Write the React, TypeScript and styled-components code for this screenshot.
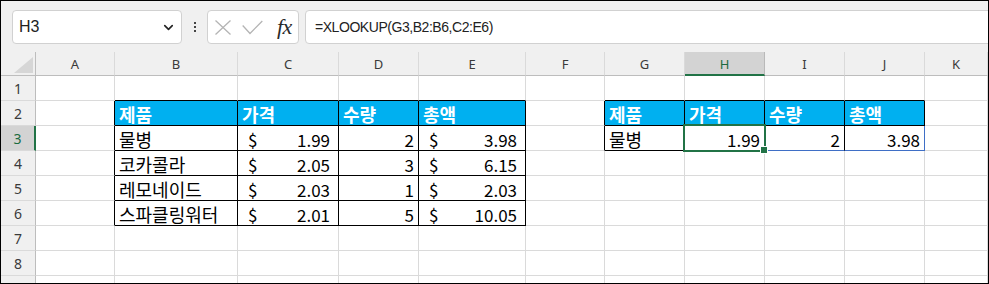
import React from 'react';
import styled, { createGlobalStyle } from 'styled-components';
import { ChevronDown } from 'lucide-react';

const GlobalStyle = createGlobalStyle`
  html, body {
    margin: 0;
    padding: 0;
    background: #ffffff;
  }
  * {
    box-sizing: border-box;
  }
`;

const colors = {
  chrome: '#f0f0f0',
  box: '#d1d1d1',
  grid: '#dadada',
  headLine: '#bdbdbd',
  headSel: '#d3d3d3',
  green: '#217346',
  greenText: '#1b6b3f',
  blue: '#3f6fc6',
  fill: '#00b0f0',
};

const GRID = '35px 79px 123px 101px 80px 107px 79px 80px 80px 80px 80px 1fr';
const COLS = ['A', 'B', 'C', 'D', 'E', 'F', 'G', 'H', 'I', 'J', 'K'];
// row 9 is only a sliver at the bottom edge, its number is hidden
const ROWS = [1, 2, 3, 4, 5, 6, 7, 8, 9];
const LAST_VISIBLE_LABEL = 8;

const Frame = styled.div`
  width: 989px;
  height: 284px;
  border: 1px solid #000;
  background: ${colors.chrome};
  display: flex;
  flex-direction: column;
  overflow: hidden;
`;

const Toolbar = styled.div`
  flex: none;
  height: 51px;
  display: flex;
  align-items: flex-start;
  padding: 9px 0 0 11px;
  font-family: 'Liberation Sans', Arial, sans-serif;
`;

const Box = styled.div`
  height: 34px;
  background: #fff;
  border: 1px solid ${colors.box};
  border-radius: 4px;
  display: flex;
  align-items: center;
`;

const NameBox = styled(Box)`
  width: 170px;
  justify-content: space-between;
  padding: 0 5px 0 6px;
  font-size: 16px;
  color: #222;
`;

const Dots = styled.div`
  width: 25px;
  height: 34px;
  display: flex;
  flex-direction: column;
  align-items: center;
  justify-content: center;
  gap: 2px;

  span {
    width: 2px;
    height: 2px;
    background: #444;
  }
`;

const FxButtons = styled(Box)`
  width: 92px;
  padding-left: 7px;
  gap: 11px;
`;

const Fx = styled.span`
  margin-left: 3px;
  font-family: 'Liberation Serif', 'Times New Roman', serif;
  font-style: italic;
  font-size: 22px;
  color: #2a2a2a;
  letter-spacing: -0.5px;
`;

const FormulaInput = styled(Box)`
  flex: 1;
  margin: 0 -12px 0 6px;
  padding-left: 9px;
  font-size: 14px;
  letter-spacing: -0.45px;
  color: #222;
`;

const Sheet = styled.div`
  flex: 1;
  display: grid;
  grid-template-columns: ${GRID};
  grid-template-rows: 24px;
  grid-auto-rows: 25px;
  background: #fff;
  overflow: hidden;
`;

const Corner = styled.div`
  position: relative;
  background: ${colors.chrome};
  border-right: 1px solid ${colors.headLine};
  border-bottom: 1px solid ${colors.headLine};

  &::after {
    content: '';
    position: absolute;
    right: 2px;
    bottom: 2px;
    border-left: 19px solid transparent;
    border-bottom: 16px solid #d6d6d6;
  }
`;

const ColHead = styled.div<{ $sel?: boolean }>`
  display: flex;
  align-items: center;
  justify-content: center;
  background: ${(p) => (p.$sel ? colors.headSel : colors.chrome)};
  color: ${(p) => (p.$sel ? colors.greenText : '#3a3a3a')};
  border-right: 1px solid ${(p) => (p.$sel ? '#b9b9b9' : colors.grid)};
  border-bottom: ${(p) => (p.$sel ? `2px solid ${colors.green}` : `1px solid ${colors.headLine}`)};
  font-family: 'Noto Sans', 'Liberation Sans', sans-serif;
  font-size: 13px;
  padding-top: 1px;
`;

const RowHead = styled.div<{ $sel?: boolean }>`
  display: flex;
  align-items: center;
  justify-content: center;
  background: ${(p) => (p.$sel ? colors.headSel : colors.chrome)};
  color: ${(p) => (p.$sel ? colors.greenText : '#3a3a3a')};
  border-right: ${(p) => (p.$sel ? `2px solid ${colors.green}` : `1px solid ${colors.headLine}`)};
  border-bottom: 1px solid ${colors.grid};
  font-family: 'Noto Sans', 'Liberation Sans', sans-serif;
  font-size: 14px;
  padding-top: 1px;
`;

const Cell = styled.div<{
  $right: string;
  $bottom: string;
  $fill?: string;
  $head?: boolean;
  $active?: boolean;
  $align?: 'left' | 'right' | 'split';
}>`
  position: relative;
  z-index: ${(p) => (p.$active ? 2 : 'auto')};
  display: flex;
  align-items: center;
  justify-content: ${(p) =>
    p.$align === 'right' ? 'flex-end' : p.$align === 'split' ? 'space-between' : 'flex-start'};
  padding: ${(p) => (p.$align === 'split' ? '2px 8px 0 10px' : '2px 4px 0 4px')};
  background: ${(p) => p.$fill || '#fff'};
  border-right: 1px solid ${(p) => p.$right};
  border-bottom: 1px solid ${(p) => p.$bottom};
  font-family: 'Noto Sans CJK KR', 'Noto Sans', sans-serif;
  font-size: 17px;
  line-height: 1;
  font-weight: ${(p) => (p.$head ? 700 : 400)};
  color: ${(p) => (p.$head ? '#fff' : '#000')};
  white-space: nowrap;
`;

// hangul labels run a touch wider than the digits
const Label = styled.span<{ $hangul?: boolean }>`
  font-size: ${(p) => (p.$hangul ? '18px' : 'inherit')};
`;

const Selection = styled.div`
  position: absolute;
  left: -2px;
  top: -2px;
  right: -2px;
  bottom: -2px;
  border: 2px solid ${colors.green};
  pointer-events: none;

  &::after {
    content: '';
    position: absolute;
    right: -4px;
    bottom: -4px;
    width: 6px;
    height: 6px;
    background: ${colors.green};
    border: 1px solid #fff;
  }
`;

type Spec = { text: string; head?: boolean; cur?: boolean; num?: boolean };

const data: Record<string, Spec> = {
  B2: { text: '제품', head: true },
  C2: { text: '가격', head: true },
  D2: { text: '수량', head: true },
  E2: { text: '총액', head: true },
  B3: { text: '물병' },
  C3: { text: '1.99', cur: true },
  D3: { text: '2', num: true },
  E3: { text: '3.98', cur: true },
  B4: { text: '코카콜라' },
  C4: { text: '2.05', cur: true },
  D4: { text: '3', num: true },
  E4: { text: '6.15', cur: true },
  B5: { text: '레모네이드' },
  C5: { text: '2.03', cur: true },
  D5: { text: '1', num: true },
  E5: { text: '2.03', cur: true },
  B6: { text: '스파클링워터' },
  C6: { text: '2.01', cur: true },
  D6: { text: '5', num: true },
  E6: { text: '10.05', cur: true },
  G2: { text: '제품', head: true },
  H2: { text: '가격', head: true },
  I2: { text: '수량', head: true },
  J2: { text: '총액', head: true },
  G3: { text: '물병' },
  H3: { text: '1.99', num: true },
  I3: { text: '2', num: true },
  J3: { text: '3.98', num: true },
};

// tables as [firstCol, firstRow, lastCol, lastRow]
const tables = [
  [1, 2, 4, 6],
  [6, 2, 9, 3],
];

const inside = (c: number, r: number, t: number[]) =>
  c >= t[0] && c <= t[2] && r >= t[1] && r <= t[3];

const borderRight = (c: number, r: number) => {
  if (COLS[c] === 'J' && r === 3) return colors.blue;
  return tables.some((t) => inside(c, r, t) || inside(c + 1, r, t)) ? '#000' : colors.grid;
};

const borderBottom = (c: number, r: number) => {
  if ((COLS[c] === 'I' || COLS[c] === 'J') && r === 3) return colors.blue;
  return tables.some((t) => inside(c, r, t) || inside(c, r + 1, t)) ? '#000' : colors.grid;
};

const SheetCell: React.FC<{ c: number; r: number }> = ({ c, r }) => {
  const key = `${COLS[c]}${r}`;
  const spec = data[key];
  const align = spec?.cur ? 'split' : spec?.num ? 'right' : 'left';
  const active = key === 'H3';

  return (
    <Cell
      $right={borderRight(c, r)}
      $bottom={borderBottom(c, r)}
      $fill={spec?.head ? colors.fill : undefined}
      $head={spec?.head}
      $active={active}
      $align={align}
    >
      {spec?.cur && <span>$</span>}
      {spec && <Label $hangul={!spec.cur && !spec.num}>{spec.text}</Label>}
      {active && <Selection />}
    </Cell>
  );
};

const App: React.FC = () => {
  return (
    <>
      <GlobalStyle />
      <Frame>
        <Toolbar>
          <NameBox>
            <span>H3</span>
            <ChevronDown size={15} strokeWidth={2.6} color="#222" />
          </NameBox>
          <Dots>
            <span />
            <span />
            <span />
          </Dots>
          <FxButtons>
            <svg width="16" height="15" viewBox="0 0 16 15">
              <path d="M0.5 0.5 L15.5 14.5 M15.5 0.5 L0.5 14.5" stroke="#b4b4b4" strokeWidth="1.3" fill="none" />
            </svg>
            <svg width="21" height="15" viewBox="0 0 21 15">
              <path d="M0.7 5.5 L8 13.5 L20.3 1" stroke="#b4b4b4" strokeWidth="1.3" fill="none" />
            </svg>
            <Fx>fx</Fx>
          </FxButtons>
          <FormulaInput>=XLOOKUP(G3,B2:B6,C2:E6)</FormulaInput>
        </Toolbar>

        <Sheet>
          <Corner />
          {COLS.map((col) => (
            <ColHead key={col} $sel={col === 'H'}>
              {col}
            </ColHead>
          ))}
          {ROWS.map((r) => (
            <React.Fragment key={r}>
              <RowHead $sel={r === 3}>{r <= LAST_VISIBLE_LABEL ? r : null}</RowHead>
              {COLS.map((col, c) => (
                <SheetCell key={col} c={c} r={r} />
              ))}
            </React.Fragment>
          ))}
        </Sheet>
      </Frame>
    </>
  );
};

export default App;
